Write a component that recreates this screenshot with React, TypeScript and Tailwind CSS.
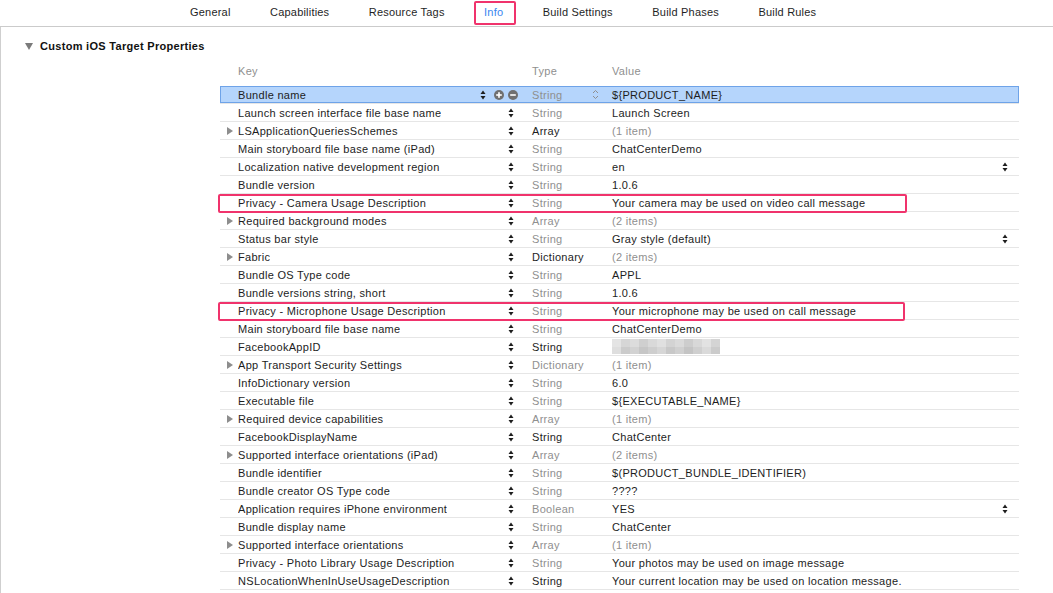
import React from "react";

type Row = {
  key: string;
  expand?: boolean;
  type: string;
  typeDark?: boolean;
  value: string;
  valueGray?: boolean;
  popup?: boolean;
  mark?: "w-[689px]" | "w-[687px]";
  blurred?: boolean;
  selected?: boolean;
};

const TABS = ["General", "Capabilities", "Resource Tags", "Info", "Build Settings", "Build Phases", "Build Rules"];

const ROWS: Row[] = [
  { key: "Bundle name", type: "String", value: "${PRODUCT_NAME}", selected: true },
  { key: "Launch screen interface file base name", type: "String", value: "Launch Screen" },
  { key: "LSApplicationQueriesSchemes", expand: true, type: "Array", typeDark: true, value: "(1 item)", valueGray: true },
  { key: "Main storyboard file base name (iPad)", type: "String", value: "ChatCenterDemo" },
  { key: "Localization native development region", type: "String", value: "en", popup: true },
  { key: "Bundle version", type: "String", value: "1.0.6" },
  { key: "Privacy - Camera Usage Description", type: "String", value: "Your camera may be used on video call message", mark: "w-[689px]" },
  { key: "Required background modes", expand: true, type: "Array", value: "(2 items)", valueGray: true },
  { key: "Status bar style", type: "String", value: "Gray style (default)", popup: true },
  { key: "Fabric", expand: true, type: "Dictionary", typeDark: true, value: "(2 items)", valueGray: true },
  { key: "Bundle OS Type code", type: "String", value: "APPL" },
  { key: "Bundle versions string, short", type: "String", value: "1.0.6" },
  { key: "Privacy - Microphone Usage Description", type: "String", value: "Your microphone may be used on call message", mark: "w-[687px]" },
  { key: "Main storyboard file base name", type: "String", value: "ChatCenterDemo" },
  { key: "FacebookAppID", type: "String", typeDark: true, value: "", blurred: true },
  { key: "App Transport Security Settings", expand: true, type: "Dictionary", value: "(1 item)", valueGray: true },
  { key: "InfoDictionary version", type: "String", value: "6.0" },
  { key: "Executable file", type: "String", value: "${EXECUTABLE_NAME}" },
  { key: "Required device capabilities", expand: true, type: "Array", value: "(1 item)", valueGray: true },
  { key: "FacebookDisplayName", type: "String", typeDark: true, value: "ChatCenter" },
  { key: "Supported interface orientations (iPad)", expand: true, type: "Array", value: "(2 items)", valueGray: true },
  { key: "Bundle identifier", type: "String", value: "$(PRODUCT_BUNDLE_IDENTIFIER)" },
  { key: "Bundle creator OS Type code", type: "String", value: "????" },
  { key: "Application requires iPhone environment", type: "Boolean", value: "YES", popup: true },
  { key: "Bundle display name", type: "String", value: "ChatCenter" },
  { key: "Supported interface orientations", expand: true, type: "Array", value: "(1 item)", valueGray: true },
  { key: "Privacy - Photo Library Usage Description", type: "String", value: "Your photos may be used on image message" },
  { key: "NSLocationWhenInUseUsageDescription", type: "String", typeDark: true, value: "Your current location may be used on location message." },
];

// pixelated blur blocks standing in for the hidden app id
const BLUR_TOP = ["bg-[#e4e4e4]", "bg-[#d6d6d6]", "bg-[#dcdcdc]", "bg-[#cfcfcf]", "bg-[#d9d9d9]", "bg-[#e0e0e0]", "bg-[#d3d3d3]", "bg-[#dadada]", "bg-[#cdcdcd]", "bg-[#d8d8d8]", "bg-[#e2e2e2]", "bg-[#d4d4d4]"];
const BLUR_BOT = ["bg-[#dedede]", "bg-[#cbcbcb]", "bg-[#d2d2d2]", "bg-[#c6c6c6]", "bg-[#cecece]", "bg-[#d6d6d6]", "bg-[#c8c8c8]", "bg-[#d0d0d0]", "bg-[#c4c4c4]", "bg-[#cfcfcf]", "bg-[#dadada]", "bg-[#cbcbcb]"];

function Stepper() {
  return (
    <svg width="6" height="10" viewBox="0 0 6 10" className="shrink-0">
      <polygon points="0.5,4 3,0.5 5.5,4" fill="#1e1e1e" />
      <polygon points="0.5,6 3,9.5 5.5,6" fill="#1e1e1e" />
    </svg>
  );
}

function Disclosure() {
  return (
    <svg width="6" height="8" viewBox="0 0 6 8">
      <polygon points="0,0 6,4 0,8" fill="#8d8d8d" />
    </svg>
  );
}

function RoundButton({ minus }: { minus?: boolean }) {
  return (
    <svg width="10" height="10" viewBox="0 0 10 10" className="shrink-0">
      <circle cx="5" cy="5" r="5" fill="#707070" />
      <rect x="2.2" y="4.2" width="5.6" height="1.6" fill="#fff" />
      {!minus && <rect x="4.2" y="2.2" width="1.6" height="5.6" fill="#fff" />}
    </svg>
  );
}

function PlistRow({ r }: { r: Row }) {
  return (
    <div
      className={
        "relative flex h-[18px] items-center border-b border-[#e6e6e6] " +
        (r.selected ? "bg-[#b5d5fc] shadow-[inset_0_0_0_1px_#6ea3e8]" : "")
      }
    >
      <div className="flex w-[260px] items-center">
        <div className="flex w-[18px] items-center pl-[7px]">{r.expand && <Disclosure />}</div>
        <span className="truncate text-[#1d1d1d]">{r.key}</span>
      </div>

      {r.selected ? (
        <div className="flex w-[52px] items-center justify-end gap-[4px] pr-[14px]">
          <Stepper />
          <span className="w-[1px]" />
          <RoundButton />
          <RoundButton minus />
        </div>
      ) : (
        <div className="flex w-[52px] items-center justify-end pr-[18px]">
          <Stepper />
        </div>
      )}

      <div className="flex w-[80px] items-center justify-between pr-[13px]">
        <span className={r.typeDark ? "text-[#1d1d1d]" : "text-[#8f8f8f]"}>{r.type}</span>
        {r.selected && (
          <svg width="7" height="11" viewBox="0 0 7 11">
            <polyline points="1,4 3.5,1.5 6,4" fill="none" stroke="#8f8f8f" strokeWidth="1" />
            <polyline points="1,7 3.5,9.5 6,7" fill="none" stroke="#8f8f8f" strokeWidth="1" />
          </svg>
        )}
      </div>

      <div className="flex flex-1 items-center justify-between pr-[11px]">
        {r.blurred ? (
          <div className="flex flex-col blur-[0.7px]">
            <div className="flex">
              {BLUR_TOP.map((c, i) => (
                <span key={i} className={"h-[8px] w-[9px] " + c} />
              ))}
            </div>
            <div className="flex">
              {BLUR_BOT.map((c, i) => (
                <span key={i} className={"h-[7px] w-[9px] " + c} />
              ))}
            </div>
          </div>
        ) : (
          <span className={r.valueGray ? "text-[#8f8f8f]" : "text-[#1d1d1d]"}>{r.value}</span>
        )}
        {r.popup && <Stepper />}
      </div>

      {r.mark && (
        <div className={"pointer-events-none absolute -left-[2px] top-0 h-[19px] rounded-[2px] border-2 border-[#f0336c] " + r.mark} />
      )}
    </div>
  );
}

export default function App() {
  return (
    <div className="flex h-[593px] w-[1053px] flex-col overflow-hidden bg-white font-['Liberation_Sans',Arial,sans-serif] text-[11px] leading-[14px] tracking-[0.3px]">
      {/* tab bar */}
      <div className="flex h-[27px] shrink-0 items-start gap-[39.5px] border-b border-[#cbcbcb] pl-[190px] pt-[5px] tracking-[0.2px]">
        {TABS.map((t) =>
          t === "Info" ? (
            <span key={t} className="relative text-[#3a86f0]">
              {t}
              <span className="absolute -left-[10px] -right-[13px] top-[-4px] h-[24px] rounded-[2px] border-2 border-[#f0336c]" />
            </span>
          ) : (
            <span key={t} className="text-[#1f1f1f]">
              {t}
            </span>
          )
        )}
      </div>

      {/* editor area */}
      <div className="flex-1 border-l border-[#cfcfcf]">
        <div className="ml-[17px] h-[564px] border-b border-[#d6d6d6]">
          <div className="mt-[10px] flex h-[18px] items-center gap-[7px] pl-[7px]">
            <svg width="8" height="7" viewBox="0 0 8 7">
              <polygon points="0,0 8,0 4,7" fill="#7b7b7b" />
            </svg>
            <span className="font-bold text-[#111]">Custom iOS Target Properties</span>
          </div>

          <div className="relative z-10 ml-[202px] w-[799px] bg-white pb-[4px]">
            <div className="mb-[6px] mt-[7px] flex h-[18px] items-center text-[#8f8f8f]">
              <span className="w-[312px] pl-[18px]">Key</span>
              <span className="w-[80px]">Type</span>
              <span>Value</span>
            </div>
            {ROWS.map((r) => (
              <PlistRow key={r.key} r={r} />
            ))}
          </div>
        </div>
      </div>
    </div>
  );
}
